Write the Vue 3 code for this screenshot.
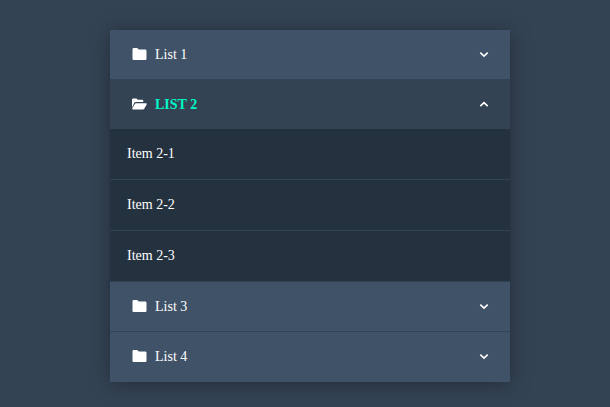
<script setup>
const lists = [
  { name: 'List 1', open: false, items: [] },
  { name: 'LIST 2', open: true, items: ['Item 2-1', 'Item 2-2', 'Item 2-3'] },
  { name: 'List 3', open: false, items: [] },
  { name: 'List 4', open: false, items: [] },
]
</script>

<template>
  <main class="page">
    <ul class="accordion">
      <li v-for="list in lists" :key="list.name" class="group" :class="{ open: list.open }">
        <div class="head">
          <svg v-if="!list.open" class="folder" viewBox="0 0 14 12" aria-hidden="true">
            <path d="M1.3 0h3.4l1.6 1.6h6.4c.7 0 1.3.6 1.3 1.3v7.8c0 .7-.6 1.3-1.3 1.3H1.3C.6 12 0 11.4 0 10.7V1.3C0 .6.6 0 1.3 0z" />
          </svg>
          <svg v-else class="folder" viewBox="0 0 16 12" aria-hidden="true">
            <path d="M0 9.6V1.3C0 .6.6 0 1.2 0h3.6l1.4 1.4h4.6c.7 0 1.2.5 1.2 1.2v1.2H4.2c-.8 0-1.5.4-1.9 1.1L0 9.6z" />
            <path d="M4.2 5.1h10.6c.7 0 1.1.7.8 1.3l-2.4 4.4c-.3.6-.8 1-1.4 1H1c-.6 0-1-.7-.7-1.2l2.7-4.7c.3-.5.8-.8 1.2-.8z" />
          </svg>
          <span class="label">{{ list.name }}</span>
          <svg class="chevron" viewBox="0 0 10 7" aria-hidden="true">
            <path v-if="list.open" d="M1.3 5.2 5 1.7l3.7 3.5" />
            <path v-else d="M1.3 1.7 5 5.2l3.7-3.5" />
          </svg>
        </div>
        <ul v-if="list.items.length" class="items">
          <li v-for="item in list.items" :key="item" class="item">{{ item }}</li>
        </ul>
      </li>
    </ul>
  </main>
</template>

<style scoped>
.page {
  height: 407px;
  box-sizing: border-box;
  padding: 30px 0 0 110px;
  background: #344354;
  font-family: "Liberation Serif", "Times New Roman", serif;
  font-size: 14px;
  color: #fff;
}
.accordion {
  width: 400px;
  margin: 0;
  padding: 0;
  list-style: none;
  box-shadow: 0 2px 20px rgba(0, 0, 0, 0.35);
}
.group + .group {
  border-top: 1px solid #344354;
}
.head {
  height: 49px;
  display: flex;
  align-items: center;
  padding: 0 21px 0 21.5px;
  background: #405267;
}
.group:last-child .head {
  height: 50px;
  padding-bottom: 1px;
  box-sizing: border-box;
}
.open .head {
  background: #344354;
}
.folder {
  width: 15px;
  height: 12px;
  margin-right: 8.5px;
  fill: #fff;
  flex: none;
  position: relative;
  top: -0.5px;
}
.label {
  flex: 1;
}
.open .label {
  color: #00f7c5;
  font-weight: 700;
}
.chevron {
  width: 10px;
  height: 7px;
  fill: none;
  stroke: #fff;
  stroke-width: 1.6;
  flex: none;
  margin-right: 0.5px;
}
.items {
  margin: 0;
  padding: 0;
  list-style: none;
  background: #243240;
}
.item {
  height: 50px;
  line-height: 49px;
  padding-left: 17px;
  box-sizing: border-box;
}
.item + .item {
  height: 51px;
  border-top: 1px solid #344354;
}
</style>
